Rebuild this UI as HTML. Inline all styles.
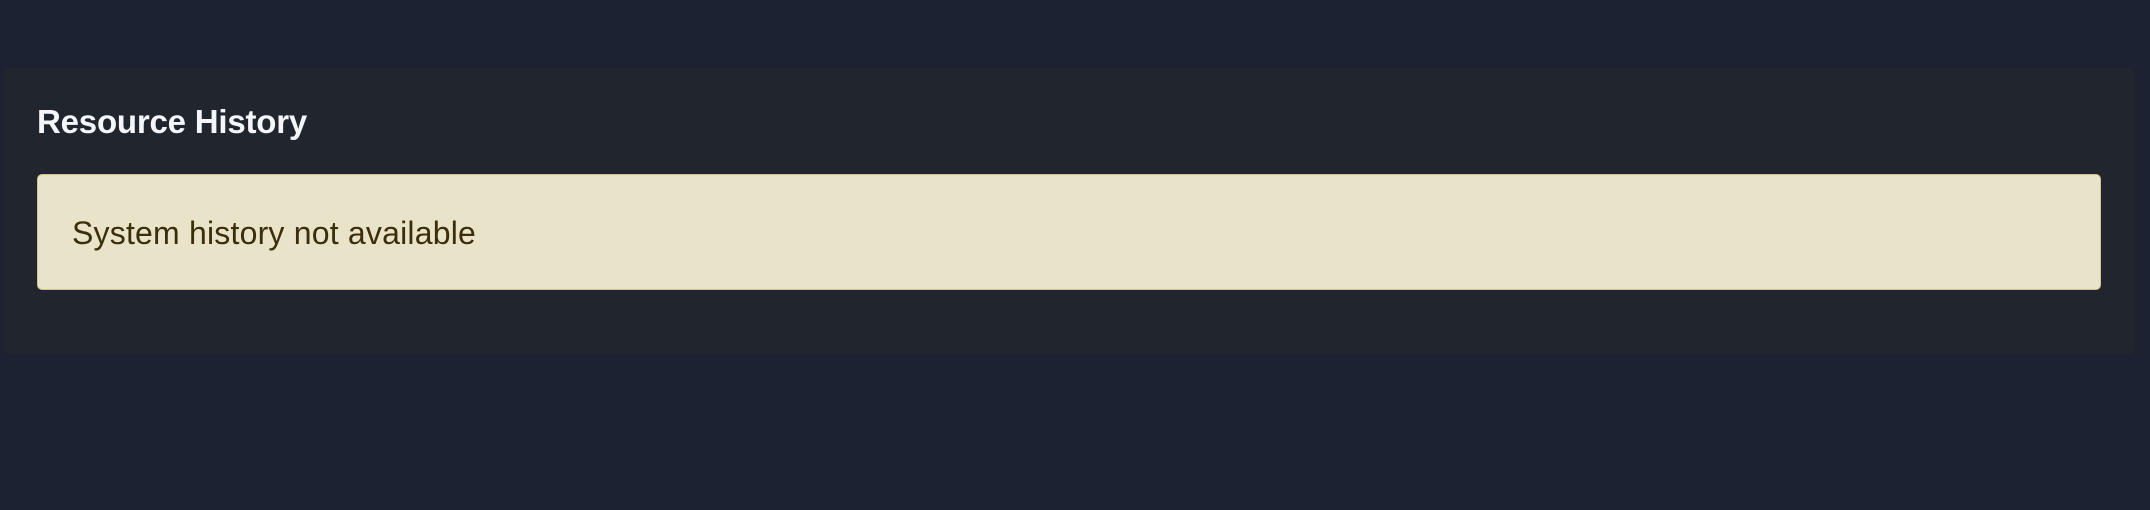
<!DOCTYPE html>
<html><head><style>
html,body{margin:0;padding:0;background:#1d2233;width:2150px;height:510px;overflow:hidden;font-family:"Liberation Sans",sans-serif;}
.card{position:absolute;left:4px;top:68px;width:2131px;height:286px;background:#21252e;border-radius:6px;}
h2{position:absolute;left:37px;top:102px;margin:0;font-size:33px;font-weight:bold;color:#f4f6fb;line-height:40px;letter-spacing:-0.2px;}
.alert{position:absolute;left:37px;top:174px;width:2064px;height:116px;background:#e9e3ca;border:1px solid #cdc38f;border-radius:5px;box-sizing:border-box;}
.alert span{position:absolute;left:34px;top:39px;font-size:32px;color:#3b2f0b;line-height:38px;letter-spacing:0.2px;}
</style></head><body>
<div class="card"></div>
<h2>Resource History</h2>
<div class="alert"><span>System history not available</span></div>
</body></html>
